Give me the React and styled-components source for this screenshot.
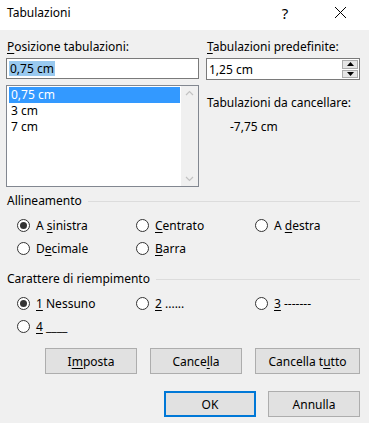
import React from 'react';
import styled, { createGlobalStyle } from 'styled-components';

const GlobalStyle = createGlobalStyle`
  html, body {
    margin: 0;
    padding: 0;
    background: #ffffff;
  }
  body {
    font-family: "Noto Sans", "Liberation Sans", Arial, sans-serif;
    font-size: 12px;
    color: #000;
  }
`;

const Window = styled.div`
  width: 369px;
  height: 428px;
  display: flex;
  flex-direction: column;
  background: #f0f0f0;
  box-sizing: border-box;
  border-bottom: 5px solid #ffffff;
`;

const TitleBar = styled.div`
  height: 30px;
  background: #ffffff;
  display: flex;
  align-items: center;
  padding: 0 6px 0 7px;
  flex-shrink: 0;
`;

const Title = styled.div`
  flex: 1;
  font-size: 12px;
  margin-top: -5px;
`;

const TitleButton = styled.div`
  width: ${p => p.$w}px;
  height: 30px;
  display: flex;
  align-items: center;
  justify-content: center;
  font-size: 15px;
  margin-top: -5px;
`;

const Body = styled.div`
  flex: 1;
  padding: 8px 9px 0 6px;
  display: flex;
  flex-direction: column;
`;

const TopGrid = styled.div`
  display: grid;
  grid-template-columns: 193px 154px;
  column-gap: 7px;
`;

const Column = styled.div`
  display: flex;
  flex-direction: column;
`;

const Label = styled.div`
  height: 20px;
  line-height: 18px;
  padding-left: 1px;
  white-space: nowrap;
`;

const TextBox = styled.div`
  height: ${p => p.$h || 21}px;
  box-sizing: border-box;
  border: 1px solid #7a7a7a;
  background: #fff;
  display: flex;
  align-items: center;
  padding-left: 2px;
  position: relative;
`;

const Selected = styled.span`
  background: #99c9ef;
  line-height: 15px;
  padding: 0 1px;
`;

const ListBox = styled.div`
  margin-top: 6px;
  height: 102px;
  box-sizing: border-box;
  border: 1px solid #828790;
  background: #fff;
  display: flex;
`;

const ListItems = styled.div`
  flex: 1;
  padding: 1px 1px 0 2px;
  display: flex;
  flex-direction: column;
`;

const ListItem = styled.div`
  height: 16px;
  line-height: 16px;
  padding-left: 2px;
  background: ${p => (p.$active ? '#3399ff' : 'transparent')};
  color: ${p => (p.$active ? '#ffffff' : '#000')};
`;

const ScrollBar = styled.div`
  width: 17px;
  background: #f0f0f0;
  display: flex;
  flex-direction: column;
  justify-content: space-between;
  align-items: center;
  padding: 4px 0;
`;

const SpinButtons = styled.div`
  position: absolute;
  right: 1px;
  top: 1px;
  bottom: 1px;
  width: 16px;
  display: flex;
  flex-direction: column;
  gap: 1px;
`;

const SpinHalf = styled.div`
  flex: 1;
  background: #e5e5e5;
  border: 1px solid #acacac;
  display: flex;
  align-items: center;
  justify-content: center;
`;

const Info = styled.div`
  padding-left: 24px;
  margin-top: 4px;
`;

const GroupHeader = styled.div`
  display: flex;
  align-items: center;
  gap: 6px;
  height: 18px;
  padding-left: 1px;
  margin-top: ${p => p.$top}px;
  &::after {
    content: '';
    flex: 1;
    border-top: 1px solid #dcdcdc;
    margin-top: 2px;
  }
`;

const RadioGrid = styled.div`
  display: grid;
  grid-template-columns: 119px 119px 1fr;
  row-gap: 9px;
  padding: 9px 0 0 11px;
`;

const RadioItem = styled.div`
  display: flex;
  align-items: center;
  gap: 6px;
  height: 14px;
  white-space: nowrap;
`;

const RadioCircle = styled.span`
  width: 13px;
  height: 13px;
  box-sizing: border-box;
  border: 1px solid #333;
  border-radius: 50%;
  background: #fff;
  display: flex;
  align-items: center;
  justify-content: center;
  flex-shrink: 0;
  &::after {
    content: '';
    width: 7px;
    height: 7px;
    border-radius: 50%;
    background: ${p => (p.$checked ? '#333' : 'transparent')};
  }
`;

const Key = styled.span`
  text-decoration: underline;
  text-underline-offset: 2px;
`;

const ButtonRow = styled.div`
  display: flex;
  justify-content: flex-end;
  gap: ${p => p.$gap}px;
  margin-top: ${p => p.$top}px;
`;

const Button = styled.div`
  width: ${p => p.$w}px;
  height: 26px;
  box-sizing: border-box;
  border: ${p => (p.$default ? '2px solid #0078d7' : '1px solid #adadad')};
  background: #e1e1e1;
  display: flex;
  align-items: center;
  justify-content: center;
`;

const Chevron = ({ up }) => (
  <svg width="9" height="6" viewBox="0 0 9 6">
    <path d={up ? 'M1 5 L4.5 1.5 L8 5' : 'M1 1 L4.5 4.5 L8 1'} fill="none" stroke="#c2c2c2" strokeWidth="1.2" />
  </svg>
);

const Tri = ({ up }) => (
  <svg width="7" height="4" viewBox="0 0 7 4">
    <path d={up ? 'M0 4 L3.5 0 L7 4 Z' : 'M0 0 L3.5 4 L7 0 Z'} fill="#000" />
  </svg>
);

const Radio = ({ checked, children }) => (
  <RadioItem>
    <RadioCircle $checked={checked} />
    <span>{children}</span>
  </RadioItem>
);

const App = () => (
  <>
    <GlobalStyle />
    <Window>
      <TitleBar>
        <Title>Tabulazioni</Title>
        <TitleButton $w={64}>?</TitleButton>
        <TitleButton $w={46}>
          <svg width="13" height="13" viewBox="0 0 13 13">
            <path d="M1 1 L12 12 M12 1 L1 12" stroke="#000" strokeWidth="1" />
          </svg>
        </TitleButton>
      </TitleBar>
      <Body>
        <TopGrid>
          <Column>
            <Label><Key>P</Key>osizione tabulazioni:</Label>
            <TextBox><Selected>0,75 cm</Selected></TextBox>
            <ListBox>
              <ListItems>
                <ListItem $active>0,75 cm</ListItem>
                <ListItem>3 cm</ListItem>
                <ListItem>7 cm</ListItem>
              </ListItems>
              <ScrollBar>
                <Chevron up />
                <Chevron />
              </ScrollBar>
            </ListBox>
          </Column>
          <Column>
            <Label><Key>T</Key>abulazioni predefinite:</Label>
            <TextBox $h={22}>
              1,25 cm
              <SpinButtons>
                <SpinHalf><Tri up /></SpinHalf>
                <SpinHalf><Tri /></SpinHalf>
              </SpinButtons>
            </TextBox>
            <Label style={{ marginTop: 14 }}>Tabulazioni da cancellare:</Label>
            <Info>-7,75 cm</Info>
          </Column>
        </TopGrid>

        <GroupHeader $top={4}>Allineamento</GroupHeader>
        <RadioGrid>
          <Radio checked>A <Key>s</Key>inistra</Radio>
          <Radio><Key>C</Key>entrato</Radio>
          <Radio>A <Key>d</Key>estra</Radio>
          <Radio>D<Key>e</Key>cimale</Radio>
          <Radio><Key>B</Key>arra</Radio>
        </RadioGrid>

        <GroupHeader $top={14}>Carattere di riempimento</GroupHeader>
        <RadioGrid>
          <Radio checked><Key>1</Key> Nessuno</Radio>
          <Radio><Key>2</Key> ......</Radio>
          <Radio><Key>3</Key> -------</Radio>
          <Radio><Key>4</Key> ____</Radio>
        </RadioGrid>

        <ButtonRow $gap={13} $top={15}>
          <Button $w={92}>I<Key>m</Key>posta</Button>
          <Button $w={92}>Cance<Key>l</Key>la</Button>
          <Button $w={105}>Cancella t<Key>u</Key>tto</Button>
        </ButtonRow>
        <ButtonRow $gap={12} $top={17}>
          <Button $w={92} $default>OK</Button>
          <Button $w={92}>Annulla</Button>
        </ButtonRow>
      </Body>
    </Window>
  </>
);

export default App;
